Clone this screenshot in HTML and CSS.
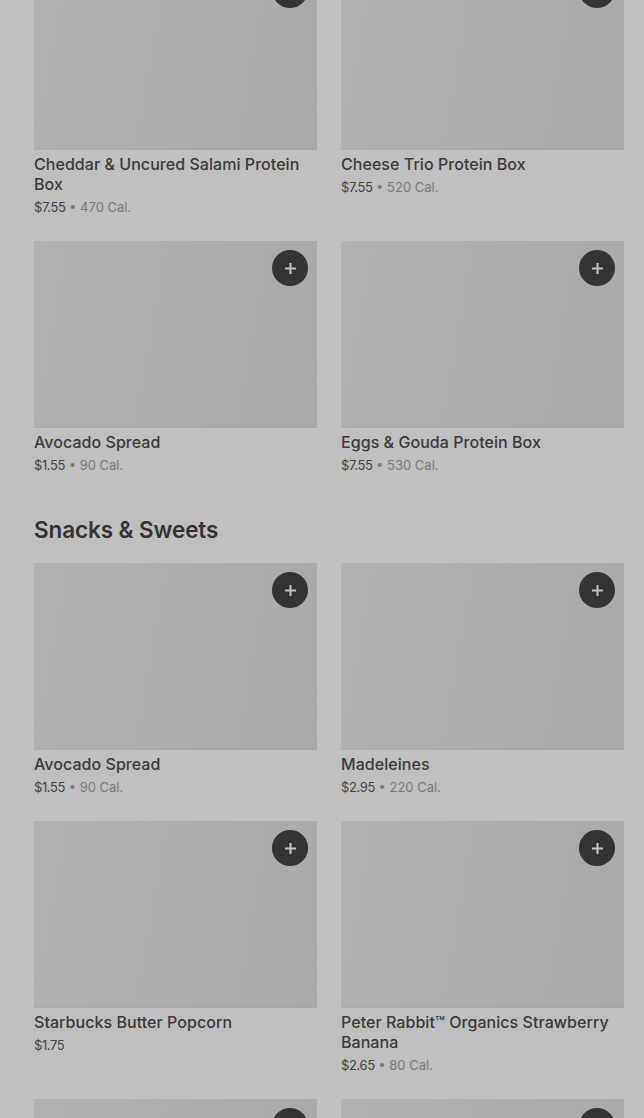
FILE: index.html
```html
<!DOCTYPE html>
<html>
<head>
  <meta charset="UTF-8">
  <title>Menu</title>
  <link rel="stylesheet" href="styles.css">
</head>
<body>
  <main class="menu">
    <section class="section">
      <div class="grid">
        <div class="item">
          <div class="thumb"><button class="add"><svg viewBox="0 0 14 14"><path d="M7 1v12M1 7h12"/></svg></button></div>
          <div class="name">Cheddar &amp; Uncured Salami Protein Box</div>
          <div class="meta"><span class="price">$7.55</span> <span class="cal">• 470 Cal.</span></div>
        </div>
        <div class="item">
          <div class="thumb"><button class="add"><svg viewBox="0 0 14 14"><path d="M7 1v12M1 7h12"/></svg></button></div>
          <div class="name">Cheese Trio Protein Box</div>
          <div class="meta"><span class="price">$7.55</span> <span class="cal">• 520 Cal.</span></div>
        </div>
        <div class="item">
          <div class="thumb"><button class="add"><svg viewBox="0 0 14 14"><path d="M7 1v12M1 7h12"/></svg></button></div>
          <div class="name">Avocado Spread</div>
          <div class="meta"><span class="price">$1.55</span> <span class="cal">• 90 Cal.</span></div>
        </div>
        <div class="item">
          <div class="thumb"><button class="add"><svg viewBox="0 0 14 14"><path d="M7 1v12M1 7h12"/></svg></button></div>
          <div class="name">Eggs &amp; Gouda Protein Box</div>
          <div class="meta"><span class="price">$7.55</span> <span class="cal">• 530 Cal.</span></div>
        </div>
      </div>
    </section>

    <section class="section">
      <h2 class="section-title">Snacks &amp; Sweets</h2>
      <div class="grid">
        <div class="item">
          <div class="thumb"><button class="add"><svg viewBox="0 0 14 14"><path d="M7 1v12M1 7h12"/></svg></button></div>
          <div class="name">Avocado Spread</div>
          <div class="meta"><span class="price">$1.55</span> <span class="cal">• 90 Cal.</span></div>
        </div>
        <div class="item">
          <div class="thumb"><button class="add"><svg viewBox="0 0 14 14"><path d="M7 1v12M1 7h12"/></svg></button></div>
          <div class="name">Madeleines</div>
          <div class="meta"><span class="price">$2.95</span> <span class="cal">• 220 Cal.</span></div>
        </div>
        <div class="item">
          <div class="thumb"><button class="add"><svg viewBox="0 0 14 14"><path d="M7 1v12M1 7h12"/></svg></button></div>
          <div class="name">Starbucks Butter Popcorn</div>
          <div class="meta"><span class="price">$1.75</span></div>
        </div>
        <div class="item">
          <div class="thumb"><button class="add"><svg viewBox="0 0 14 14"><path d="M7 1v12M1 7h12"/></svg></button></div>
          <div class="name">Peter Rabbit™ Organics Strawberry Banana</div>
          <div class="meta"><span class="price">$2.65</span> <span class="cal">• 80 Cal.</span></div>
        </div>
        <div class="item">
          <div class="thumb"><button class="add"><svg viewBox="0 0 14 14"><path d="M7 1v12M1 7h12"/></svg></button></div>
        </div>
        <div class="item">
          <div class="thumb"><button class="add"><svg viewBox="0 0 14 14"><path d="M7 1v12M1 7h12"/></svg></button></div>
        </div>
      </div>
    </section>
  </main>
</body>
</html>
```

FILE: styles.css
```css
html, body {
  margin: 0;
  padding: 0;
  height: 100%;
  background: #bfbfbf;
  font-family: Inter, 'Noto Sans', sans-serif;
  color: #3a3a3a;
  overflow: hidden;
}
.menu {
  /* page is scrolled: first row of images is cut off at the top */
  margin-top: -37px;
  padding: 0 20px 0 34px;
}
.grid {
  display: grid;
  grid-template-columns: 283px 283px;
  column-gap: 24px;
  row-gap: 24px;
}
.section-title {
  margin: 41px 0 19px;
  font-size: 22.5px;
  line-height: 28px;
  font-weight: 600;
  letter-spacing: -0.1px;
  color: #343434;
}
.thumb {
  position: relative;
  height: 187px;
  background: linear-gradient(100deg, #b1b1b1 0%, #aaaaaa 100%);
  box-shadow: inset 0 -2px 0 rgba(0, 0, 0, 0.02);
}
.add {
  position: absolute;
  top: 9px;
  right: 9px;
  width: 36px;
  height: 36px;
  padding: 0;
  border: none;
  border-radius: 50%;
  background: #343434;
  display: flex;
  align-items: center;
  justify-content: center;
  cursor: pointer;
}
.add svg {
  width: 13px;
  height: 13px;
  fill: none;
  stroke: #c4c4c4;
  stroke-width: 2.2;
}
.name {
  margin-top: 4px;
  font-size: 16px;
  line-height: 20px;
  font-weight: 500;
  letter-spacing: 0.05px;
  color: #3b3b3b;
}
.meta {
  margin-top: 3px;
  font-size: 13px;
  line-height: 20px;
}
.price {
  color: #444;
  letter-spacing: -0.4px;
}
.cal {
  color: #7b7b7b;
}
```
